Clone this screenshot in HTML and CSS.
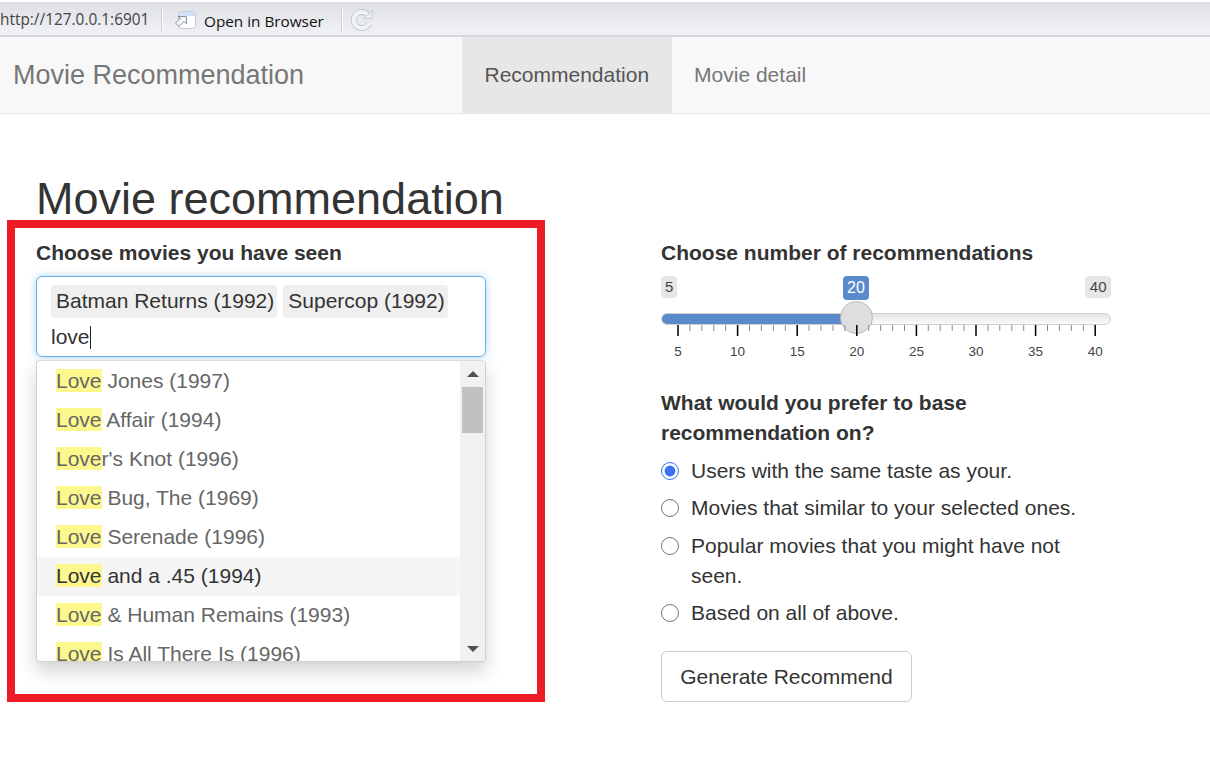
FILE: index.html
```html
<!DOCTYPE html>
<html lang="en">
<head>
  <meta charset="UTF-8">
  <title>Movie Recommendation</title>
  <link rel="stylesheet" href="styles.css">
</head>
<body>
  <div class="toolbar">
    <span class="url">http://127.0.0.1:6901</span>
    <span class="tool-sep"></span>
    <svg class="open-icon" width="24" height="20" viewBox="0 0 24 20">
      <rect x="5.500" y="1.500" width="17" height="17" rx="3" fill="#fff" stroke="#c3cad4"/>
      <path d="M6 4a2.500 2.500 0 0 1 2.500-2h11a2.500 2.500 0 0 1 2.500 2v2h-16z" fill="#cfe2f6"/>
      <path d="M13.500 6.500v7.500l-2.500-2.500-5 5-3.500-3.500 5-5-2.500-1.500z" fill="#f4f5f7" stroke="#8d949e"/>
    </svg>
    <span class="open-link">Open in Browser</span>
    <span class="tool-sep tool-sep-2"></span>
    <svg class="reload-icon" width="24" height="24" viewBox="0 0 24 24">
      <path class="reload-outer" d="M16.500 6.500A8 8 0 1 0 18 15.500"/>
      <path class="reload-inner" d="M16.500 6.500A8 8 0 1 0 18 15.500"/>
      <path d="M21 2.500v8h-8z" fill="#eef1f6" stroke="#c3cad6"/>
    </svg>
  </div>

  <nav class="navbar">
    <a class="brand">Movie Recommendation</a>
    <a class="tab active">Recommendation</a>
    <a class="tab">Movie detail</a>
  </nav>

  <main class="page">
    <h1>Movie recommendation</h1>
    <div class="columns">
      <section class="col">
        <label class="field-label">Choose movies you have seen</label>
        <div class="select-box">
          <div class="chips">
            <span class="chip">Batman Returns (1992)</span>
            <span class="chip">Supercop (1992)</span>
          </div>
          <div class="typed">love<span class="caret"></span></div>
        </div>
        <div class="dropdown">
          <div class="options">
            <div class="option"><mark>Love</mark> Jones (1997)</div>
            <div class="option"><mark>Love</mark> Affair (1994)</div>
            <div class="option"><mark>Love</mark>r's Knot (1996)</div>
            <div class="option"><mark>Love</mark> Bug, The (1969)</div>
            <div class="option"><mark>Love</mark> Serenade (1996)</div>
            <div class="option hover"><mark>Love</mark> and a .45 (1994)</div>
            <div class="option"><mark>Love</mark> &amp; Human Remains (1993)</div>
            <div class="option"><mark>Love</mark> Is All There Is (1996)</div>
          </div>
          <div class="scrollbar">
            <span class="arrow-up"></span>
            <span class="thumb"></span>
            <span class="arrow-down"></span>
          </div>
        </div>
      </section>

      <section class="col">
        <label class="field-label">Choose number of recommendations</label>
        <div class="slider">
          <span class="badge badge-min">5</span>
          <span class="badge badge-max">40</span>
          <span class="badge badge-value">20</span>
          <div class="track"><div class="track-fill"></div></div>
          <span class="handle"></span>
          <svg class="grid" width="450" height="37" viewBox="0 0 450 37">
            <path class="major" d="M17 0v11M76.600 0v11M136.200 0v11M195.800 0v11M255.400 0v11M315 0v11M374.600 0v11M434.200 0v11"/>
            <path class="minor" d="M28.900 0v6M40.800 0v6M52.800 0v6M64.700 0v6M88.500 0v6M100.400 0v6M112.400 0v6M124.300 0v6M148.100 0v6M160 0v6M172 0v6M183.900 0v6M207.700 0v6M219.600 0v6M231.600 0v6M243.500 0v6M267.300 0v6M279.200 0v6M291.200 0v6M303.100 0v6M326.900 0v6M338.800 0v6M350.800 0v6M362.700 0v6M386.500 0v6M398.400 0v6M410.400 0v6M422.300 0v6"/>
            <text x="17" y="31">5</text>
            <text x="76.600" y="31">10</text>
            <text x="136.200" y="31">15</text>
            <text x="195.800" y="31">20</text>
            <text x="255.400" y="31">25</text>
            <text x="315" y="31">30</text>
            <text x="374.600" y="31">35</text>
            <text x="434.200" y="31">40</text>
          </svg>
        </div>

        <label class="field-label base-label">What would you prefer to base recommendation on?</label>
        <div class="radios">
          <label class="radio"><input type="radio" name="base" checked><span>Users with the same taste as your.</span></label>
          <label class="radio"><input type="radio" name="base"><span>Movies that similar to your selected ones.</span></label>
          <label class="radio radio-wide"><input type="radio" name="base"><span>Popular movies that you might have not seen.</span></label>
          <label class="radio"><input type="radio" name="base"><span>Based on all of above.</span></label>
        </div>
        <button class="btn" type="button">Generate Recommend</button>
      </section>
    </div>
  </main>

  <div class="red-frame"></div>
</body>
</html>
```

FILE: styles.css
```css
html, body {
  margin: 0;
  padding: 0;
  height: 765px;
  overflow: hidden;
}
body {
  position: relative;
  background: #fff;
  color: #333;
  font-family: "Liberation Sans", Arial, sans-serif;
  font-size: 21px;
  line-height: 30px;
}

/* browser strip on top */
.toolbar {
  display: flex;
  align-items: center;
  box-sizing: border-box;
  height: 37px;
  padding-top: 2px;
  background: linear-gradient(#dfe0e4, #f1f2f5);
  border-bottom: 2px solid #d5d7dc;
  border-top: 2px solid #fff;
  font-family: "Open Sans", "Noto Sans", sans-serif;
}
.url {
  width: 161px;
  font-size: 15.400px;
  color: #444;
  white-space: nowrap;
}
.tool-sep {
  width: 2px;
  height: 24px;
  background: #d0d2d7;
  border-right: 1px solid #fafafa;
  box-sizing: border-box;
}
.open-icon {
  margin-left: 10px;
}
.open-link {
  margin-left: 7px;
  width: 137px;
  font-size: 15.300px;
  color: #111;
  padding-top: 2px;
  white-space: nowrap;
}
.reload-icon {
  margin-left: 8px;
}
.reload-outer,
.reload-inner {
  fill: none;
}
.reload-outer {
  stroke: #c3cad6;
  stroke-width: 6;
}
.reload-inner {
  stroke: #f1f3f7;
  stroke-width: 4;
}

.navbar {
  display: flex;
  height: 77px;
  box-sizing: border-box;
  background: #f8f8f8;
  border-bottom: 1px solid #e7e7e7;
}
.brand {
  width: 449px;
  padding-left: 13px;
  font-size: 27px;
  line-height: 76px;
  color: #777;
}
.tab {
  padding: 0 22.500px;
  line-height: 75px;
  color: #777;
}
.tab.active {
  background: #e7e7e7;
  color: #555;
}

.page {
  padding: 60px 0 0 36px;
}
h1 {
  margin: 0 0 14px;
  font-size: 45px;
  font-weight: 500;
  line-height: 50px;
}
.columns {
  display: flex;
  gap: 175px;
}
.col {
  position: relative;
  width: 450px;
}
.field-label {
  display: block;
  margin-bottom: 8px;
  font-weight: bold;
}

/* multi select */
.select-box {
  box-sizing: border-box;
  height: 81px;
  padding: 8px 14px;
  background: #fff;
  border: 1px solid #66afe9;
  border-radius: 6px;
  box-shadow: 0 0 8px rgba(102, 175, 233, 0.5);
}
.chips {
  display: flex;
  gap: 6px;
}
.chip {
  height: 33px;
  padding: 0 3px 0 5px;
  background: #efefef;
  border-radius: 4px;
  line-height: 32px;
}
.typed {
  margin-top: 4px;
  line-height: 30px;
}
.caret {
  display: inline-block;
  width: 1px;
  height: 23px;
  margin-left: 0;
  background: #222;
  vertical-align: -5px;
}
.dropdown {
  position: absolute;
  top: 122px;
  left: 0;
  display: flex;
  width: 450px;
  height: 302px;
  overflow: hidden;
  box-sizing: border-box;
  background: #fff;
  border: 1px solid #d0d0d0;
  border-top-color: #dcdcdc;
  border-radius: 4px;
  box-shadow: 0 9px 18px rgba(0, 0, 0, 0.18);
}
.options {
  flex: 1;
  overflow: hidden;
  padding-top: 1px;
}
.option {
  height: 39px;
  padding-left: 19px;
  line-height: 37px;
  color: #666;
  white-space: nowrap;
}
.option.hover {
  background: #f5f5f5;
  color: #333;
}
mark {
  background: #fcf88e;
  color: inherit;
}
.scrollbar {
  display: flex;
  flex-direction: column;
  align-items: center;
  width: 25px;
  background: #f1f1f1;
}
.arrow-up,
.arrow-down {
  width: 0;
  height: 0;
  border-left: 6px solid transparent;
  border-right: 6px solid transparent;
}
.arrow-up {
  margin-top: 10px;
  border-bottom: 6px solid #505050;
}
.arrow-down {
  margin-top: auto;
  margin-bottom: 9px;
  border-top: 6px solid #505050;
}
.thumb {
  width: 21px;
  height: 46px;
  margin-top: 10px;
  background: #c1c1c1;
}

/* range slider */
.slider {
  position: relative;
  height: 85px;
  margin-bottom: 27px;
  font-size: 13.500px;
}
.badge {
  position: absolute;
  top: 0;
  height: 22px;
  padding: 0 4px;
  background: #e6e6e6;
  border-radius: 4px;
  line-height: 22px;
  color: #444;
  font-size: 15px;
}
.badge-min { left: 0; }
.badge-max { right: 0; padding: 0 4.500px; }
.badge-value {
  left: 182px;
  height: 24px;
  padding: 0 4px;
  background: #5a8acb;
  color: #fff;
  font-size: 16px;
  line-height: 24px;
}
.track {
  position: absolute;
  top: 37px;
  left: 0;
  right: 0;
  height: 12px;
  overflow: hidden;
  box-sizing: border-box;
  background: linear-gradient(#e4e4e4, #fafafa);
  border: 1px solid #cfcfcf;
  border-radius: 6px;
}
.track-fill {
  width: 195px;
  height: 12px;
  margin: -1px 0 0 -1px;
  background: #5a8acb;
}
.handle {
  position: absolute;
  top: 25px;
  left: 179px;
  box-sizing: border-box;
  width: 33px;
  height: 33px;
  background: #dedede;
  border: 1px solid #b9b9b9;
  border-radius: 50%;
}
.grid {
  position: absolute;
  top: 49px;
  left: 0;
}
.grid .major {
  stroke: #000;
  stroke-width: 1.500;
  fill: none;
}
.grid .minor {
  stroke: #8c8c8c;
  stroke-width: 1;
  fill: none;
}
.grid text {
  fill: #444;
  font-size: 13.500px;
  text-anchor: middle;
}

.base-label {
  margin-bottom: 8px;
}
.radios {
  display: flex;
  flex-direction: column;
  gap: 7px;
}
.radio {
  display: flex;
  padding-right: 20px;
}
.radio-wide {
  margin-top: 1px;
}
.radio input {
  flex: none;
  width: 18px;
  height: 18px;
  margin: 6px 12px 0 0;
  accent-color: #3b71f3;
}
.btn {
  display: block;
  box-sizing: border-box;
  width: 251px;
  height: 51px;
  margin-top: 23px;
  padding: 0;
  background: #fff;
  border: 1px solid #ccc;
  border-radius: 6px;
  color: #333;
  font-family: inherit;
  font-size: 21px;
}

/* red annotation drawn over the screenshot */
.red-frame {
  position: absolute;
  top: 220px;
  left: 7px;
  box-sizing: border-box;
  width: 538px;
  height: 482px;
  border: 8px solid #ed1c24;
  pointer-events: none;
}
```
